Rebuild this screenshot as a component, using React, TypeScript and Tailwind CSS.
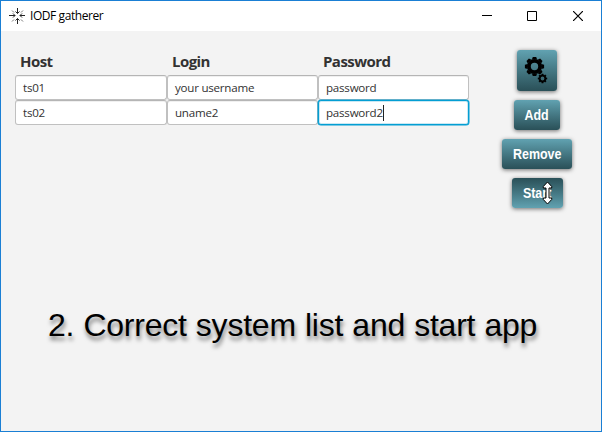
import type { ReactNode } from 'react';

const FONT = "font-['Open_Sans','Noto_Sans',sans-serif]";

function AppIcon() {
  return (
    <svg width="16" height="16" viewBox="0 0 16 16" fill="none" stroke="#222" strokeWidth="1" className="shrink-0">
      <path d="M8.5 0v5.5M8.5 10.5V16M0 7.5h6M11 7.5h5M6.5 3.5l2 2 2-2M6.5 12.5l2-2 2 2M4 5.5l2 2-2 2M13 5.5l-2 2 2 2" />
      <path stroke="#777" d="M3 2.5l2 2M14 2.5l-2 2M3 13.5l2-2M14 13.5l-2-2" />
    </svg>
  );
}

function TitleBar() {
  return (
    <header className="flex h-[30px] shrink-0 items-center bg-white pl-2">
      <AppIcon />
      <span className="ml-[5px] text-[12px] leading-4 tracking-[-0.43px] text-black">IODF gatherer</span>
      <div className="ml-auto flex">
        <span className="flex h-[30px] w-[45px] items-center justify-center">
          <svg width="10" height="10" viewBox="0 0 10 10" stroke="#000" className="-translate-x-px"><path d="M0 4.5h10" /></svg>
        </span>
        <span className="flex h-[30px] w-[45px] items-center justify-center">
          <svg width="10" height="10" viewBox="0 0 10 10" fill="none" stroke="#000" className="-translate-x-px"><path d="M.5.5h9v9h-9z" /></svg>
        </span>
        <span className="flex h-[30px] w-[46px] items-center justify-center">
          <svg width="10" height="10" viewBox="0 0 10 10" stroke="#000" strokeWidth="1.2"><path d="M0 0l10 10M10 0L0 10" /></svg>
        </span>
      </div>
    </header>
  );
}

function Heading({ children }: { children: string }) {
  return (
    <h2 className="h-[25px] pl-[5px] text-[15px] font-bold leading-[22px] tracking-[-0.55px] text-[#323232]">{children}</h2>
  );
}

function Field({ value, focused = false }: { value: string; focused?: boolean }) {
  const edge = focused
    ? 'border-[#039ed3] shadow-[inset_0_0_0_1px_#c9e8f3,0_0_0_0.5px_#039ed3]'
    : 'border-[#c0c0c0] border-t-[#b5b5b5] shadow-[inset_0_1px_0_#f0f0f0]';
  return (
    <div className={`flex h-[25px] items-center rounded-[3px] border bg-white pl-[7px] text-[11.6px] leading-4 tracking-[-0.24px] text-[#323232] ${edge}`}>
      <span>{value}</span>
      {focused && <span className="h-[16px] w-px bg-[#222]" />}
    </div>
  );
}

function ActionButton({ children, size, pressed = false }: { children: ReactNode; size: string; pressed?: boolean }) {
  const fill = pressed ? 'from-[#2a5058] to-[#61a2b1]' : 'from-[#61a2b1] to-[#2a5058]';
  return (
    <button
      className={`relative flex items-center justify-center rounded-[3px] bg-linear-to-b ${fill} font-['Liberation_Sans',Arial,sans-serif] text-[15px] font-bold leading-none text-white shadow-[0_1px_4px_rgba(0,0,0,0.55)] ${size}`}
    >
      {children}
    </button>
  );
}

function Label({ children }: { children: string }) {
  return <span className="mb-[2px] inline-block scale-x-[0.83]">{children}</span>;
}

function Gear({ cx, cy, r, hole, tooth }: { cx: number; cy: number; r: number; hole: number; tooth: number }) {
  const body = r * 0.78;
  return (
    <g transform={`translate(${cx} ${cy})`}>
      <circle r={(body + hole) / 2} fill="none" stroke="#000" strokeWidth={body - hole} />
      {[0, 45, 90, 135, 180, 225, 270, 315].map((a) => (
        <path
          key={a}
          transform={`rotate(${a})`}
          d={`M${-tooth} ${-body + 0.6}L${-tooth * 0.65} ${-r}H${tooth * 0.65}L${tooth} ${-body + 0.6}z`}
        />
      ))}
    </g>
  );
}

function ResizeCursor() {
  return (
    <svg className="absolute left-[30px] top-[3px]" width="11" height="24" viewBox="0 0 11 24">
      <path d="M5.5 1L9.7 5.5V7H7V17H9.7V18.5L5.5 23 1.3 18.5V17H4V7H1.3V5.5z" fill="#fff" stroke="#000" strokeWidth="1" />
    </svg>
  );
}

export default function App() {
  return (
    <div className={`flex h-[432px] w-[602px] flex-col overflow-hidden border border-[#1a7fd4] bg-[#f3f3f3] ${FONT}`}>
      <TitleBar />
      <main className="flex h-[248px] items-start pl-[14px] pt-[19px]">
        <section className="grid w-[454px] grid-cols-[152px_151px_151px]">
          <Heading>Host</Heading>
          <Heading>Login</Heading>
          <Heading>Password</Heading>
          <Field value="ts01" />
          <Field value="your username" />
          <Field value="password" />
          <Field value="ts02" />
          <Field value="uname2" />
          <Field value="password2" focused />
        </section>
        <aside className="ml-[33px] flex w-[70px] flex-col items-center gap-[9px]">
          <ActionButton size="h-[41px] w-[40px]">
            <svg width="40" height="41" viewBox="0 0 40 41">
              <Gear cx={17.5} cy={16.5} r={9.6} hole={3.7} tooth={2.6} />
              <Gear cx={25.5} cy={28.5} r={4.7} hole={1.9} tooth={1.3} />
            </svg>
          </ActionButton>
          <ActionButton size="h-[30px] w-[46px]"><Label>Add</Label></ActionButton>
          <ActionButton size="h-[30px] w-[70px]"><Label>Remove</Label></ActionButton>
          <ActionButton size="h-[30px] w-[51px]" pressed>
            <Label>Start</Label>
            <ResizeCursor />
          </ActionButton>
        </aside>
      </main>
      <p className="pl-[47px] pt-[28px] font-['Liberation_Sans',Arial,sans-serif] text-[32px] leading-[36px] tracking-[-0.23px] [word-spacing:0.5px] whitespace-nowrap text-black [text-shadow:1px_4px_4px_rgba(0,0,0,0.5)]">
        2. Correct system list and start app
      </p>
    </div>
  );
}
